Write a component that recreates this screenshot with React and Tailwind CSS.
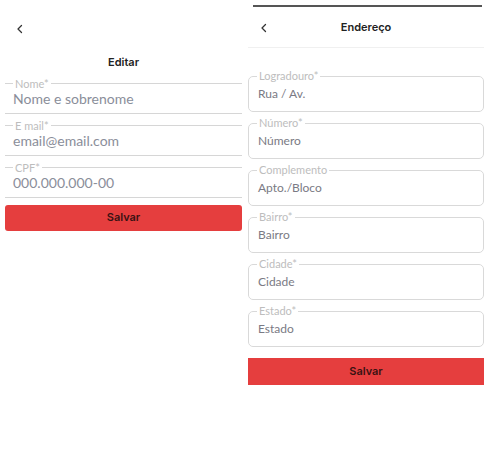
import React from 'react';

const Chevron = () => (
    <svg width="12" height="12" viewBox="0 0 24 24" fill="none" stroke="#333" strokeWidth="2.5" strokeLinecap="round" strokeLinejoin="round">
        <path d="M15 5l-7 7 7 7" />
    </svg>
);

const LineField = ({ label, value }) => (
    <fieldset className="border-t border-b border-[#d6d6d6] pl-[8px] pr-2 pb-[5px]">
        <legend className="px-[2px] text-[11px] leading-[14px] text-[#bdbdbd]">{label}</legend>
        <div className="-mt-[1px] text-[14px] leading-[18px] text-[#8a8e9a]">{value}</div>
    </fieldset>
);

const BoxField = ({ label, value }) => (
    <fieldset className="border border-[#d9d9d9] rounded-[5px] pl-[9px] pr-2 pb-[7px]">
        <legend className="-ml-[1px] px-[2px] text-[11px] leading-[14px] text-[#bdbdbd]">{label}</legend>
        <div className="pt-[1px] text-[12px] leading-[20px] text-[#7a7a84]">{value}</div>
    </fieldset>
);

const App = () => {

    const left = [
        ['Nome*', 'Nome e sobrenome'],
        ['E mail*', 'email@email.com'],
        ['CPF*', '000.000.000-00'],
    ];

    const right = [
        ['Logradouro*', 'Rua / Av.'],
        ['Número*', 'Número'],
        ['Complemento', 'Apto./Bloco'],
        ['Bairro*', 'Bairro'],
        ['Cidade*', 'Cidade'],
        ['Estado*', 'Estado'],
    ];

    return (
        <div className="w-[490px] h-[451px] bg-white flex" style={{ fontFamily: 'Lato, "Noto Sans", sans-serif' }}>

            <div className="w-[247px] pl-[5px] pr-[5px]">
                <div className="pt-[23px] pl-[9px] h-[34px]">
                    <Chevron />
                </div>
                <h1 className="mt-[20px] text-center text-[11px] font-semibold text-[#222]" style={{ fontFamily: 'Inter, sans-serif' }}>
                    Editar
                </h1>
                <div className="mt-[6px] flex flex-col gap-[5px]">
                    {left.map(([l, v]) => (
                        <LineField key={l} label={l} value={v} />
                    ))}
                </div>
                <button className="mt-[7px] w-full h-[26px] rounded-[3px] bg-[#e53e3e] text-[11px] font-semibold text-[#3a1212]" style={{ fontFamily: 'Inter, sans-serif' }}>
                    Salvar
                </button>
            </div>

            <div className="flex-1 pl-[1px] pr-[6px]">
                <div className="mt-[5px] ml-[5px] mr-[2px] h-[2px] bg-[#555]" />
                <div className="h-[41px] flex items-center border-b border-[#f0f0f0] relative">
                    <div className="pl-[10px] pt-[1px]">
                        <Chevron />
                    </div>
                    <div className="absolute inset-0 flex items-center justify-center text-[11px] font-semibold text-[#222]" style={{ fontFamily: 'Inter, sans-serif' }}>
                        Endereço
                    </div>
                </div>
                <div className="mt-[21px] flex flex-col gap-[4px]">
                    {right.map(([l, v]) => (
                        <BoxField key={l} label={l} value={v} />
                    ))}
                </div>
                <button className="mt-[11px] w-full h-[27px] bg-[#e53e3e] text-[11px] font-semibold text-[#3a1212]" style={{ fontFamily: 'Inter, sans-serif' }}>
                    Salvar
                </button>
            </div>

        </div>
    );
};

export default App;
